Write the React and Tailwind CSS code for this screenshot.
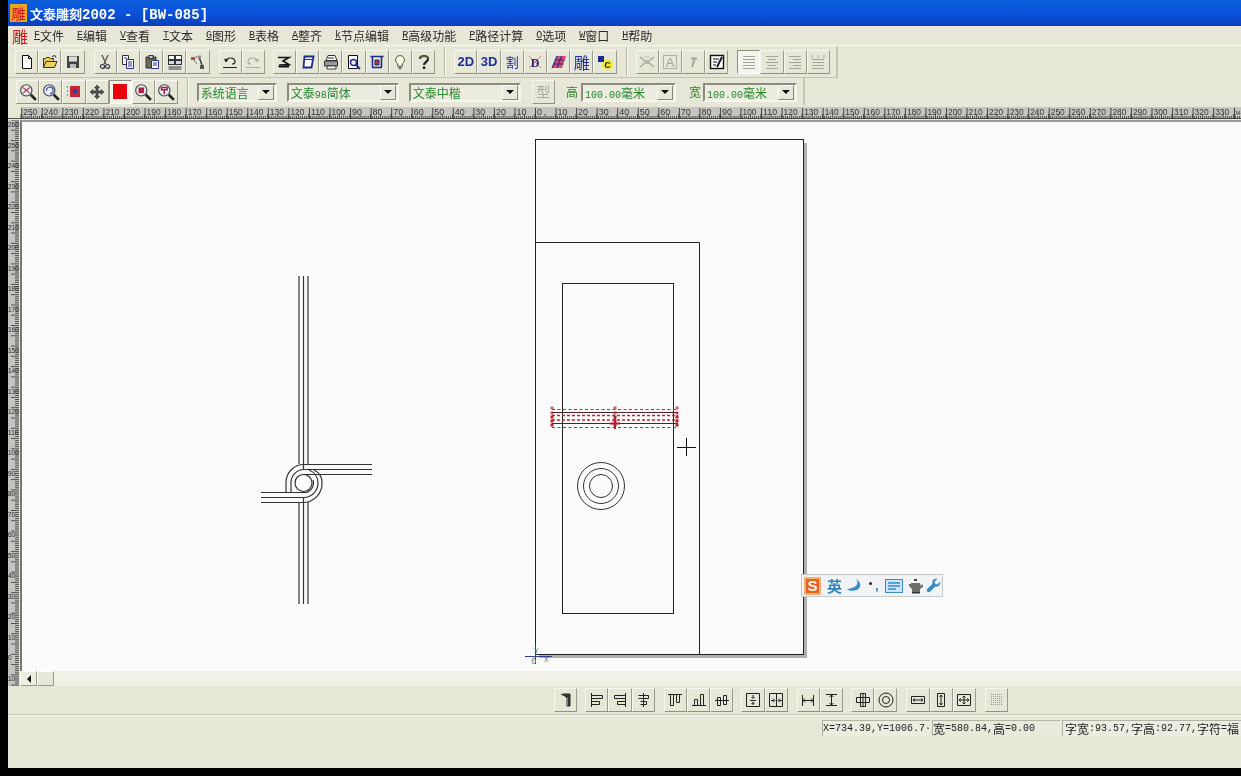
import React from "react";

const Ic = ({ children, className = "" }) => (
  <svg viewBox="0 0 16 16" className={"w-4 h-4 " + className} fill="none" strokeWidth="1">{children}</svg>
);

const Mixed = ({ text, latin = "text-[10px]", cjk = "text-[12px]" }) =>
  text.split(/([\u4e00-\u9fff]+)/).filter(Boolean).map((part, i) =>
    /[\u4e00-\u9fff]/.test(part)
      ? <span key={i} className={"font-['Noto_Sans_CJK_SC',sans-serif] " + cjk}>{part}</span>
      : <span key={i} className={"font-['Liberation_Mono',monospace] " + latin}>{part}</span>
  );

const Btn = ({ children, pressed, className = "" }) => (
  <div className={"w-[23.2px] h-6 shrink-0 flex items-center justify-center border " +
    (pressed
      ? "border-t-[#8f8f84] border-l-[#8f8f84] border-r-white border-b-white bg-[#f4f4ec] "
      : "border-t-[#f7f7f0] border-l-[#f7f7f0] border-r-[#9b9b8e] border-b-[#8f8f84] ") + className}>
    {children}
  </div>
);

const Sep = ({ className = "" }) => (
  <div className={"w-0.5 self-stretch border-l border-l-[#b9b9aa] border-r border-r-[#fafaf4] " + className} />
);

const NewIc = () => <Ic><path d="M3.5 1.5h6l3 3v10h-9z M9.5 1.5v3h3" stroke="#111" fill="#fff" /></Ic>;
const OpenIc = () => <Ic><path d="M1.5 13.5v-9h2l1-1h3l1 1h3v2" stroke="#333" fill="#e8c84a" /><path d="M1.5 13.5l2.5-6h11l-2.5 6z" stroke="#333" fill="#f0d060" /><path d="M10 2.5l3-1 1 2" stroke="#333" /></Ic>;
const SaveIc = () => <Ic><rect x="2" y="2" width="12" height="12" fill="#444" /><rect x="4" y="2.5" width="8" height="5" fill="#ddd" /><rect x="5" y="10" width="6" height="4" fill="#bbb" /></Ic>;
const CutIc = () => <Ic><path d="M5 1l4 9M11 1l-4 9" stroke="#555" strokeWidth="1.3" /><circle cx="5.5" cy="12.5" r="2" stroke="#334" strokeWidth="1.2" /><circle cx="10.5" cy="12.5" r="2" stroke="#334" strokeWidth="1.2" /></Ic>;
const CopyIc = () => <Ic><path d="M2.5 1.5h6v9h-6z" stroke="#333" fill="#fff" /><path d="M6.5 5.5h7v9h-7z" stroke="#223388" fill="#fff" /><path d="M8 8h4M8 10h4M8 12h4M4 4h3" stroke="#223388" /></Ic>;
const PasteIc = () => <Ic><path d="M2 3h10v11H2z" fill="#6b6b55" stroke="#333" /><rect x="5" y="1.5" width="4" height="3" fill="#ccc" stroke="#333" /><path d="M7.5 6.5h7v8h-7z" fill="#fff" stroke="#223388" /><path d="M9 9h4M9 11h4" stroke="#223388" /></Ic>;
const MultiIc = () => <Ic><rect x="1.5" y="1.5" width="6" height="4" fill="#fff" stroke="#333" /><rect x="8.5" y="1.5" width="6" height="4" fill="#fff" stroke="#333" /><rect x="1.5" y="6.5" width="6" height="4" fill="#cfd6ea" stroke="#333" /><rect x="8.5" y="6.5" width="6" height="4" fill="#cfd6ea" stroke="#333" /><path d="M1.5 13h13M1.5 15h13" stroke="#334" /></Ic>;
const LinkIc = () => <Ic><path d="M1 3h4v3H1z" fill="#c24848" /><path d="M5 3h4" stroke="#3a6" /><path d="M9 3l3 8" stroke="#333" strokeWidth="1.4" /><rect x="8" y="1.5" width="3" height="3" fill="#889" /><rect x="10" y="11" width="4" height="4" fill="#555" /><path d="M4 6l3 4" stroke="#777" /></Ic>;
const UndoIc = ({ c = "#222" }) => <Ic><path d="M4 7C5 3 12 3 13 7c.5 2-1 3-3 3" stroke={c} strokeWidth="1.2" /><path d="M2 4.500l1.500 4 3-2.500z" fill={c} /><path d="M1 13.500h14" stroke={c} /></Ic>;
const RedoIc = ({ c = "#aaa" }) => <Ic><path d="M12 7C11 3 4 3 3 7c-.5 2 1 3 3 3" stroke={c} strokeWidth="1.2" /><path d="M14 4.500l-1.500 4-3-2.500z" fill={c} /><path d="M1 13.500h14" stroke={c} /></Ic>;
const SIc = () => <Ic><path d="M2 3.500h11L7 7l6 3.500-10 .5" stroke="#111" strokeWidth="1.600" /><path d="M2 12l11-1v2.500H3z" fill="#111" /></Ic>;
const ParaIc = () => <Ic><path d="M4.500 2.500h9l-2 11h-8z" fill="#fff" stroke="#1b2b8e" strokeWidth="1.800" /><path d="M5 5.500h8" stroke="#1b2b8e" /></Ic>;
const PrintIc = () => <Ic><path d="M5 1.500h7l2 5H3z" fill="#fff" stroke="#333" /><path d="M1.500 7h13v5h-13z" fill="#999" stroke="#333" /><path d="M4 12h9v3H4z" fill="#fff" stroke="#333" /><path d="M5 4h6" stroke="#333" /></Ic>;
const PreviewIc = () => <Ic><path d="M2.500 1.500h9v13h-9z" fill="#fff" stroke="#111" /><circle cx="7.500" cy="8.500" r="3" fill="#eef" stroke="#1b2b8e" strokeWidth="1.500" /><path d="M10 11l4 4" stroke="#1b2b8e" strokeWidth="2" /></Ic>;
const FrameIc = () => <Ic><path d="M1.500 2.500h13M3 13.500h10" stroke="#1b2b8e" strokeWidth="1.600" /><path d="M3.500 3v10M12.500 3v10" stroke="#1b2b8e" strokeWidth="1.600" /><path d="M6 6h4v5H6z" fill="#b33" stroke="#1b2b8e" /></Ic>;
const BulbIc = () => <Ic><path d="M8 1.500a4.500 4.500 0 0 0-2.500 8.200V12h5V9.700A4.500 4.500 0 0 0 8 1.500z" fill="#f6f6d8" stroke="#555" /><path d="M6 13.500h4M7 15h2" stroke="#555" /></Ic>;
const QIc = () => <Ic><path d="M4 5c0-4 8-4 8 0 0 3-4 3-4 6" stroke="#222" strokeWidth="2.200" /><rect x="6.800" y="12.500" width="2.500" height="2.500" fill="#222" /><path d="M4 5c0-4 8-4 8 0" stroke="#d8c860" strokeWidth=".6" /></Ic>;
const DXIc = () => <Ic><path d="M2 2l12 12M14 2L2 14" stroke="#c98a8a" /><text x="8" y="12.500" textAnchor="middle" fontSize="12" fontWeight="700" fill="#3b1a78" fontFamily="Liberation Serif">D</text></Ic>;
const ColorIc = () => <Ic><path d="M6 2h9l-4 12H1z" fill="#d94a63" /><path d="M6 2l-5 12M10.500 2L6 14M3.500 6h10M2.500 10h10" stroke="#24308e" strokeWidth="1.100" /></Ic>;
const BCIc = () => <Ic><circle cx="10.500" cy="10.500" r="5.500" fill="#f4ec30" /><rect x="1" y="2" width="6" height="6" fill="#1b2b8e" /><text x="10.500" y="13.500" textAnchor="middle" fontSize="8.500" fontWeight="700" fill="#111" fontFamily="Liberation Sans">C</text></Ic>;
const FlipIc = () => <Ic><path d="M1 3l5 4 4 0 5-4M1 13l5-4h4l5 4" stroke="#a9a99c" strokeWidth="1.500" /><path d="M5 3h6" stroke="#c4c4b6" /></Ic>;
const ABoxIc = () => <Ic><rect x="1.500" y="1.500" width="13" height="13" stroke="#b0b0a3" /><text x="8" y="13" textAnchor="middle" fontSize="13" fill="#a3a396" fontFamily="Liberation Sans">A</text></Ic>;
const ItalIc = () => <Ic><path d="M7 13L10 4M6 4.500h6" stroke="#a3a396" strokeWidth="1.800" /></Ic>;
const EditIc = () => <Ic><rect x="1.500" y="1.500" width="13" height="13" fill="#fff" stroke="#111" strokeWidth="1.400" /><path d="M4 5h6M4 8h4M4 11h3" stroke="#111" /><path d="M13 3L8 13" stroke="#111" strokeWidth="1.800" /></Ic>;
const Lines = ({ v = "l", c = "#a3a396" }) => {
  const a = { l: [2, 14, 2, 14], c: [2, 14, 4, 12], r: [2, 14, 6, 14] }[v];
  return <Ic>{[2.5, 5.5, 8.5, 11.5, 14.5].map((y, i) => <path key={y} d={`M${i % 2 ? a[2] : a[0]} ${y}H${i % 2 ? a[3] : a[1]}`} stroke={c} />)}</Ic>;
};
const JustIc = () => <Ic><path d="M2 1v3M14 1v3M8 1v3" stroke="#a3a396" /><path d="M2 5.500h12M2 8.500h12M2 11.500h12M2 14.500h12" stroke="#a3a396" /></Ic>;

const Lens = ({ children }) => (
  <Ic className="w-[18px] h-[18px]">
    <circle cx="6.500" cy="6.500" r="5" fill="#e8eef6" stroke="#445" />
    {children}
    <path d="M10.500 10.500l4.500 4.500" stroke="#222" strokeWidth="2.400" />
  </Ic>
);

const Combo = ({ text, w, className = "" }) => (
  <div className={"h-[19px] mt-px flex items-center justify-between border-2 border-t-[#8b8b7f] border-l-[#8b8b7f] border-r-[#f7f7f0] border-b-[#f7f7f0] bg-[#ecece0] shrink-0 " + w + " " + className}>
    <span className="pl-0.5 text-[#27872f] whitespace-nowrap leading-none"><Mixed text={text} latin="text-[10px]" /></span>
    <span className="w-[16px] h-[15px] mr-px bg-[#e8e8da] border border-t-white border-l-white border-r-[#88887c] border-b-[#88887c] flex items-center justify-center">
      <svg viewBox="0 0 8 4" className="w-2 h-1"><path d="M0 0h8L4 4z" fill="#111" /></svg>
    </span>
  </div>
);

const HRuler = () => {
  const zero = 535.5, step = 20.55, labels = [];
  for (let v = -25; v <= 33; v++) labels.push(v);
  const ticks = [];
  for (let x = 21; x < 1241; x += 2.055) ticks.push(x);
  return (
    <svg className="block w-[1233px] h-[15px]" viewBox="8 105 1233 15">
      <rect x="21" y="107" width="1220" height="11" fill="#c4c4c0" />
      <rect x="8" y="118" width="1233" height="1" fill="#555" />
      <path d={ticks.map((x, i) => `M${x.toFixed(1)} 119V${i % 5 === 0 ? 114 : 116}`).join("")} stroke="#333" strokeWidth=".8" />
      {labels.map((v) => {
        const x = zero + v * step;
        return (
          <g key={v}>
            <path d={`M${x} 108V119`} stroke="#222" strokeWidth=".8" />
            <text x={x + 1.500} y="114.500" fontSize="8.500" textLength={v === 0 ? 5 : Math.abs(v) >= 10 ? 14 : 10} lengthAdjust="spacingAndGlyphs" fill="#333" fontFamily="Liberation Sans">{Math.abs(v) * 10}</text>
          </g>
        );
      })}
      <path d="M1234.500 108V119" stroke="#222" strokeWidth=".8" />
      <text x="1235" y="114.500" fontSize="5" fill="#333" fontFamily="Liberation Sans">34</text>
    </svg>
  );
};

const VRuler = () => {
  const labels = [], ticks = [];
  for (let v = 26; v >= -1; v--) labels.push(v);
  for (let y = 120; y < 686; y += 2.055) ticks.push(y);
  return (
    <svg className="block w-3 h-[566px] shrink-0" viewBox="8 120 12 566">
      <rect x="8" y="120" width="11" height="566" fill="#c4c4c0" />
      <path d={ticks.map((y, i) => `M19 ${y.toFixed(1)}H${i % 5 === 0 ? 11 : 15}`).join("")} stroke="#333" strokeWidth=".8" />
      {labels.map((v) => (
        <text key={v} x="8" y={660 - v * 20.5} fontSize="6.500" fill="#222" fontFamily="Liberation Sans">{Math.abs(v) * 10}</text>
      ))}
    </svg>
  );
};

const Handles = () => {
  const pts = [];
  [552, 615, 677].forEach((x) => [408, 413, 417, 421, 425].forEach((y) => pts.push([x, y])));
  return pts.map(([x, y], i) => <rect key={i} x={x - 1.500} y={y - 1.500} width="3" height="3" fill="#b5222e" opacity={y > 415 ? 1 : .7} />);
};

const Canvas = () => (
  <svg className="block flex-1 min-h-0 w-full" viewBox="22 122 1219 549" fill="none">
    <rect x="804" y="143" width="3" height="514" fill="#b0b0b0" />
    <rect x="539" y="655" width="268" height="3" fill="#b0b0b0" />
    <rect x="535.500" y="139.500" width="268" height="515" fill="#fbfbfb" stroke="#222" />
    <path d="M535.500 242.500H699.500V654.500" stroke="#222" />
    <rect x="562.500" y="283.500" width="111" height="330" stroke="#222" />
    <circle cx="601" cy="486" r="23.500" stroke="#333" />
    <circle cx="601" cy="486" r="17.500" stroke="#333" />
    <circle cx="601" cy="486" r="11.500" stroke="#333" />
    <path d="M552 409.500H678M552 427.500H678" stroke="#c02a3a" strokeDasharray="3 2.500" />
    <path d="M552 415.500H678M552 420H678" stroke="#b02a3a" strokeWidth="1.700" strokeDasharray="3 2" />
    <path d="M552 412.500H678M552 423.500H678" stroke="#4a2428" strokeWidth="1.200" />
    <Handles />
    <path d="M610 423.500h10M615 418v11" stroke="#b5222e" strokeWidth="2" />
    <path d="M686.500 438V456M677 447.500H696" stroke="#111" />
    <path d="M299 276V464M303.500 276V469M308 276V464M299 502V604M303.500 497V604M308 502V604" stroke="#333" strokeWidth="1.200" />
    <path d="M372 464.500H304A18 18 0 0 0 286 482.500V492M372 469.500H304A13 13 0 0 0 291 482.500V492M372 474.500H303A8.500 8.500 0 1 0 312 483A8.500 8.500 0 0 0 303 474.500" stroke="#333" strokeWidth="1.200" />
    <path d="M261 492.500H304A9.500 9.500 0 0 0 313 480M261 497.500H304A14.500 14.500 0 0 0 318 483A14 14 0 0 0 309 470M261 502.500H304A19 19 0 0 0 322 483A14 14 0 0 0 314 470" stroke="#333" strokeWidth="1.200" />
    <path d="M535.500 644V664M525 656.500H552" stroke="#2b3f8c" />
    <text x="534" y="653" fontSize="8" fill="#6a7a9a" fontFamily="Liberation Mono">Y</text>
    <text x="531" y="664" fontSize="9" fill="#6a7a9a" fontFamily="Liberation Mono">0</text>
    <text x="544" y="662" fontSize="8" fill="#6a7a9a" fontFamily="Liberation Mono">X</text>
  </svg>
);

const Glyph = ({ d, extra }) => (
  <Ic>
    <path d={d} stroke="#222" />
    {extra}
  </Ic>
);

const Sogou = () => (
  <div className="absolute left-[793px] top-[574px] w-[142px] h-[23px] bg-[#f1f3f5] border border-[#c6c9cc] flex items-center pl-0.5">
    <span className="w-[17px] h-[18px] bg-[#e8641c] border-2 border-[#f3b078] flex items-center justify-center text-white font-bold text-[15px] leading-none font-['Liberation_Sans',sans-serif]">S</span>
    <span className="ml-[6px] text-[15px] font-bold leading-none text-[#2f86bd] font-['Noto_Sans_CJK_SC',sans-serif]">英</span>
    <svg viewBox="0 0 16 16" className="ml-1 w-[15px] h-[15px]"><path d="M11 1c3 5 1 9-10 11 5 3 12 2 14-3 1-3-1-6-4-8z" fill="#3a8cc8" /></svg>
    <span className="ml-2 w-[3px] h-[3px] rounded-full bg-[#222] -mt-[5px]" />
    <span className="ml-[3px] text-[13px] font-bold leading-none text-[#2f86bd] font-['Liberation_Sans',sans-serif]">,</span>
    <svg viewBox="0 0 18 14" className="ml-[6px] w-[18px] h-[14px]"><rect x=".5" y=".5" width="17" height="13" fill="#cfe4f4" stroke="#3a8cc8" /><path d="M3 4h12M3 7h12M3 10h8" stroke="#3a8cc8" strokeWidth="1.400" /></svg>
    <svg viewBox="0 0 16 16" className="ml-[5px] w-4 h-4"><path d="M6 1h3v2H6z" fill="#444" /><path d="M3 5h9l1 3 2-2v3l-3 2v3H4v-3L1 8V6h2z" fill="#6e6e68" /><path d="M4 14h8v1.500H4z" fill="#333" /></svg>
    <svg viewBox="0 0 16 16" className="ml-[2px] w-[15px] h-[15px]"><path d="M15 4l-3 3-2-1-1-2 3-3c-3-1-6 1-5 5L1 12c-1 2 1 4 3 3l6-6c3 1 6-2 5-5z" fill="#3a8cc8" /></svg>
  </div>
);

export default function App() {
  const menu = ["F文件", "E编辑", "V查看", "T文本", "G图形", "B表格", "A整齐", "k节点编辑", "R高级功能", "P路径计算", "O选项", "W窗口", "H帮助"];
  return (
    <div className="relative w-[1241px] h-[776px] bg-black pl-2 pb-2 overflow-hidden flex">
      <div className="relative w-[1233px] h-[768px] bg-[#e6e7d7] flex flex-col text-[#222] blur-[0.35px]">
        {/* title */}
        <div className="h-[26px] shrink-0 flex items-center pl-0.5 bg-gradient-to-b from-[#0c5ddc] via-[#0a52dc] to-[#0a3fb8]">
          <span className="w-[17px] h-[18px] bg-[#e6a81c] text-[#d01818] text-[14px] leading-[18px] text-center font-['Noto_Sans_CJK_SC',sans-serif]">雕</span>
          <span className="ml-[3px] text-white font-bold whitespace-pre leading-none"><Mixed text="文泰雕刻2002 - [BW-085]" latin="text-[14px]" cjk="text-[13px]" /></span>
        </div>
        {/* menu */}
        <div className="h-5 shrink-0 flex items-center pl-1 text-[#2a2a2a] border-b border-b-[#f7f7f0]">
          <span className="w-4 text-[#d01818] text-[16px] leading-none font-['Noto_Sans_CJK_SC',sans-serif]">雕</span>
          <div className="ml-[6px] flex gap-[13px]">
            {menu.map((m) => (
              <span key={m} className="whitespace-nowrap leading-none flex items-center">
                <span className="underline text-[10px] w-[6px] font-['Liberation_Mono',monospace]">{m[0]}</span>
                <span className="text-[12px] font-['Noto_Sans_CJK_SC',sans-serif]">{m.slice(1)}</span>
              </span>
            ))}
          </div>
        </div>
        {/* toolbar 1 */}
        <div className="h-[32px] shrink-0 flex">
          <div className="w-[830px] flex items-center pl-[7px] border-b border-b-[#c5c5b6] border-r-2 border-r-[#c5c5b6]">
            <Btn><NewIc /></Btn><Btn><OpenIc /></Btn><Btn><SaveIc /></Btn>
            <Btn className="ml-[9px]"><CutIc /></Btn><Btn><CopyIc /></Btn><Btn><PasteIc /></Btn><Btn><MultiIc /></Btn><Btn><LinkIc /></Btn>
            <Btn className="ml-[9px]"><UndoIc /></Btn><Btn><RedoIc /></Btn>
            <Btn className="ml-2"><SIc /></Btn><Btn><ParaIc /></Btn><Btn><PrintIc /></Btn><Btn><PreviewIc /></Btn><Btn><FrameIc /></Btn><Btn><BulbIc /></Btn><Btn><QIc /></Btn>
            <Sep className="ml-[9px] my-px" />
            <Btn className="ml-2 text-[#1d2d9c] font-bold text-[13px] font-['Liberation_Sans',sans-serif]">2D</Btn>
            <Btn className="text-[#1d2d9c] font-bold text-[13px] font-['Liberation_Sans',sans-serif]">3D</Btn>
            <Btn className="text-[#1d2d9c] text-[13px] font-['Noto_Sans_CJK_SC',sans-serif]">割</Btn>
            <Btn><DXIc /></Btn><Btn><ColorIc /></Btn>
            <Btn className="text-[#1d2d9c] text-[16px] font-['Noto_Sans_CJK_SC',sans-serif]">雕</Btn>
            <Btn><BCIc /></Btn>
            <Sep className="ml-[9px] my-px" />
            <Btn className="ml-2"><FlipIc /></Btn><Btn><ABoxIc /></Btn><Btn><ItalIc /></Btn><Btn><EditIc /></Btn>
            <Btn pressed className="ml-[9px]"><Lines v="l" /></Btn><Btn><Lines v="c" /></Btn><Btn><Lines v="r" /></Btn><Btn><JustIc /></Btn>
          </div>
        </div>
        {/* toolbar 2 */}
        <div className="h-[27px] shrink-0 flex">
          <div className="w-[797px] flex items-center pl-2 border-r-2 border-r-[#c5c5b6]">
            <Btn className="w-[22px]"><Lens><path d="M3.500 4l6 5M9.500 4l-6 5" stroke="#b03a3a" /></Lens></Btn>
            <Btn className="w-[22px]"><Lens><path d="M4 7a3 3 0 1 1 3 2.500" stroke="#2a3f9c" /></Lens></Btn>
            <Btn className="w-[22px]"><Ic><path d="M1 3h2M1 7h2M1 11h2" stroke="#334" strokeDasharray="1 1" /><rect x="4" y="2" width="10" height="11" fill="#d0203a" /><rect x="7" y="5" width="4" height="4" fill="#2a3f9c" /></Ic></Btn>
            <Btn className="w-[23px]"><Ic><path d="M8 1l2.500 3H9v3h3V5.500L15 8l-3 2.500V9H9v3h1.500L8 15l-2.500-3H7V9H4v1.500L1 8l3-2.500V7h3V4H5.500z" fill="#555" stroke="#111" strokeWidth=".5" /></Ic></Btn>
            <Btn pressed className="w-[23px]"><span className="w-[14px] h-[15px] bg-[#e8000c] block" /></Btn>
            <Btn className="w-[22px]"><Lens><rect x="4" y="4" width="5" height="5" fill="#a6243c" /></Lens></Btn>
            <Btn className="w-[23px]"><Lens><path d="M4 4h5v2H4zM6.500 6v4" stroke="#a6243c" strokeWidth="1.400" /></Lens></Btn>
            <Sep className="ml-[9px] -my-px" />
            <Combo text="系统语言" w="w-[80px]" className="ml-2" />
            <Combo text="文泰98简体" w="w-[112px]" className="ml-[10px]" />
            <Combo text="文泰中楷" w="w-[112px]" className="ml-[10px]" />
            <Btn className="ml-[11px] w-[22px] text-[#a9a99c] text-[14px] font-['Noto_Sans_CJK_SC',sans-serif]">型</Btn>
            <span className="ml-[11px] w-[15px] text-[#27872f] text-[12px] leading-none font-['Noto_Sans_CJK_SC',sans-serif]">高</span>
            <Combo text="100.00毫米" w="w-[95px]" />
            <span className="ml-[13px] w-[14px] text-[#27872f] text-[12px] leading-none font-['Noto_Sans_CJK_SC',sans-serif]">宽</span>
            <Combo text="100.00毫米" w="w-[94px]" />
          </div>
        </div>
        {/* ruler */}
        <div className="h-[15px] shrink-0"><HRuler /></div>
        {/* canvas */}
        <div className="h-[566px] shrink-0 flex">
          <VRuler />
          <div className="flex-1 min-w-0 flex flex-col">
            <div className="h-[551px] flex flex-col border-l-2 border-t-2 border-l-[#777] border-t-[#9a9a9a] bg-[#fbfbfb]">
              <Canvas />
            </div>
            <div className="h-[15px] flex bg-[#f1f1e6]">
              <div className="w-[17px] border border-t-white border-l-white border-r-[#9b9b8e] border-b-[#9b9b8e] bg-[#eeeee2] flex items-center justify-center">
                <svg viewBox="0 0 4 8" className="w-1 h-2"><path d="M4 0v8L0 4z" fill="#111" /></svg>
              </div>
              <div className="w-[17px] border border-t-white border-l-white border-r-[#9b9b8e] border-b-[#9b9b8e] bg-[#e6e7d7]" />
            </div>
          </div>
        </div>
        {/* bottom toolbar */}
        <div className="h-[29px] shrink-0 flex items-center pl-[546px] border-b border-b-[#c5c5b6]">
          <Btn><Glyph d="M3 2l6 3M5 2h7v12H9V6z" extra={<path d="M3 2l7 4v8h2V2z" fill="#333" />} /></Btn>
          <Btn className="ml-2"><Glyph d="M2.500 1v14M2.500 3.500h11v3h-11M2.500 9.500h8v3h-8" /></Btn>
          <Btn><Glyph d="M13.500 1v14M13.500 3.500h-11v3h11M13.500 9.500h-8v3h8" /></Btn>
          <Btn><Glyph d="M8.500 1v14M3.500 3.500h10v3h-10M5.500 9.500h6v3h-6" /></Btn>
          <Btn className="ml-[9px]"><Glyph d="M1 2.500h14M3.500 2.500v11h3v-11M9.500 2.500v8h3v-8" /></Btn>
          <Btn><Glyph d="M1 13.500h14M3.500 13.500v-6h3v6M9.500 13.500v-11h3v11" /></Btn>
          <Btn><Glyph d="M1 8.500h14M3.500 5.500h3v8h-3zM9.500 3.500h3v9h-3z" /></Btn>
          <Btn className="ml-2"><Glyph d="M1.500 1.500h13v13h-13zM8 3v3M8 10v3M5 8.500h6M6.500 5l1.500 1.500L9.500 5M6.500 12L8 10.500 9.500 12" /></Btn>
          <Btn><Glyph d="M1.500 1.500h13v13h-13zM8.500 2v12M3 8.500h3M11 8.500h3M5 6.500L7 8.500 5 10.500M12 6.500L10 8.500 12 10.500" /></Btn>
          <Btn className="ml-[9px]"><Glyph d="M2.500 3v11M13.500 3v11M3 8.500h10M5 6.500L3 8.500l2 2M11 6.500l2 2-2 2" /></Btn>
          <Btn><Glyph d="M3 2.500h11M3 13.500h11M8.500 3v10M6.500 5L8.500 3l2 2M6.500 11l2 2 2-2" /></Btn>
          <Btn className="ml-2"><Glyph d="M5.500 1.500h5v13h-5zM1.500 5.500h13v5h-13zM8 1.500v13" /></Btn>
          <Btn><Ic><circle cx="8" cy="8" r="7" stroke="#222" /><circle cx="8" cy="8" r="3.500" stroke="#222" /></Ic></Btn>
          <Btn className="ml-[9px]"><Glyph d="M1.500 4.500h13v7h-13zM3 8h10M5 6.500L3 8l2 1.500M11 6.500L13 8l-2 1.500" /></Btn>
          <Btn><Glyph d="M4.500 1.500h7v13h-7zM8 3v10M6.500 5L8 3l1.500 2M6.500 11L8 13l1.500-2" /></Btn>
          <Btn><Glyph d="M1.500 2.500h13v11h-13zM3 8h10M8 4v8M5 6.500L3 8l2 1.500M11 6.500L13 8l-2 1.500M6.500 5.500L8 4l1.500 1.500M6.500 10.500L8 12l1.500-1.500" /></Btn>
          <Btn className="ml-[9px]"><Ic><path d="M2 2.500h12M2 4.500h12M2 6.500h12M2 8.500h12M2 10.500h12M2 12.500h12" stroke="#999" strokeDasharray="1 1" /></Ic></Btn>
        </div>
        {/* status */}
        <div className="flex-1 flex items-start pt-[4px] pl-[814px] border-t border-t-[#f4f4ec]">
          <div className="w-[108px] h-[16px] flex items-center overflow-hidden border-t border-l border-t-[#b4b4a6] border-l-[#b4b4a6] bg-[#ecece0] leading-none whitespace-nowrap"><Mixed text="X=734.39,Y=1006.7·" latin="text-[10px]" /></div>
          <div className="ml-0.5 w-[128px] h-[16px] flex items-center overflow-hidden border-t border-l border-t-[#b4b4a6] border-l-[#b4b4a6] bg-[#e9e9dc] leading-none whitespace-nowrap"><Mixed text="宽=580.84,高=0.00" latin="text-[10px]" /></div>
          <div className="ml-0.5 flex-1 h-[16px] flex items-center overflow-hidden border-t border-l border-t-[#b4b4a6] border-l-[#b4b4a6] bg-[#ecece0] pl-0.5 leading-none whitespace-nowrap"><Mixed text="字宽:93.57,字高:92.77,字符=福" latin="text-[10px]" /></div>
        </div>
        <Sogou />
      </div>
    </div>
  );
}
